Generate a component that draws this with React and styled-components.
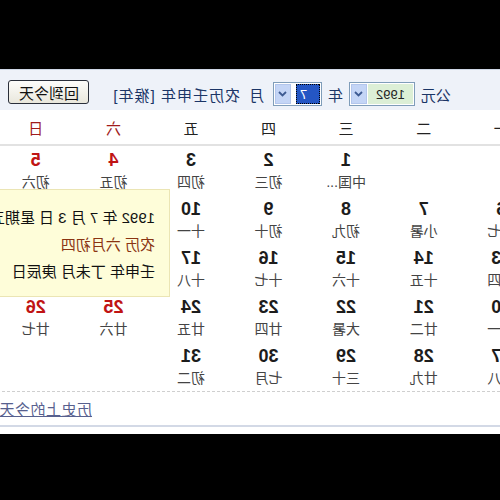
import React from 'react'
import styled, { createGlobalStyle } from 'styled-components'

const Global = createGlobalStyle`
  html, body { margin: 0; padding: 0; background: #000; }
  body { font-family: "Liberation Sans", "Noto Sans CJK SC", sans-serif; }
`

// the reference is a mirror image, so the whole page is flipped
const Stage = styled.div`
  width: 500px;
  height: 500px;
  overflow: hidden;
  background: #000;
  transform: scaleX(-1);
  padding-top: 69px;
  box-sizing: border-box;
`

const Panel = styled.div`
  width: 543px;
  margin-left: -40px;
  background: #fff;
  border-top: 1px solid #cfd7e6;
  padding-bottom: 7px;
`

const Header = styled.div`
  height: 40px;
  background: #eef2f9;
  display: flex;
  align-items: center;
  padding: 8px 0 0 89px;
  box-sizing: border-box;
  font-size: 15px;
  color: #1b3566;
`

const Label = styled.span`
  margin: ${p => p.m || '0 6px'};
`

const Select = styled.div`
  display: flex;
  height: 20px;
  border: 1px solid #7f9db9;
  background: #fff;
  padding: 1px;
  box-sizing: content-box;
`

const Field = styled.div`
  width: ${p => p.w}px;
  display: flex;
  align-items: center;
  justify-content: ${p => (p.hl ? 'flex-end' : 'center')};
  padding-right: ${p => (p.hl ? '4px' : '0')};
  box-sizing: border-box;
  font-size: 13px;
  color: ${p => (p.hl ? '#fff' : '#222')};
  background: ${p => (p.hl ? '#2456c4' : '#dcefd6')};
  outline: ${p => (p.hl ? '1px dotted #000' : 'none')};
  outline-offset: -1px;
`

const Arrow = styled.div`
  width: 16px;
  display: flex;
  align-items: center;
  justify-content: center;
  background: #c4d5f6;
  border: 1px solid #b3c6ec;
  box-sizing: border-box;
  margin-left: ${p => p.gap || 0}px;
`

const Lunar = styled.span`
  margin-left: 9px;
  font-size: 15px;
  color: #1b3566;
  letter-spacing: 1px;
`

const TodayBtn = styled.button`
  margin-left: 23px;
  width: 81px;
  height: 24px;
  padding: 0;
  font: 15px "Liberation Sans", "Noto Sans CJK SC", sans-serif;
  color: #111;
  background: linear-gradient(#fdfdfb, #e9e7dc);
  border: 1px solid #2a2f3a;
  border-radius: 3px;
  margin-top: -4px;
`

const Weeks = styled.div`
  display: grid;
  grid-template-columns: repeat(7, 1fr);
  height: 34px;
  align-items: center;
  border-bottom: 2px solid #e2e2e2;
`

const Week = styled.div`
  text-align: center;
  font-size: 15px;
  color: ${p => (p.red ? '#a01c1c' : '#222')};
`

const Grid = styled.div`
  position: relative;
  display: grid;
  grid-template-columns: repeat(7, 1fr);
  grid-auto-rows: 49px;
  border-bottom: 1px dashed #cfcfcf;
`

const Cell = styled.div`
  display: flex;
  flex-direction: column;
  align-items: center;
  padding-top: 4px;
`

const Num = styled.div`
  height: 20px;
  line-height: 20px;
  font-size: 18px;
  font-weight: bold;
  color: ${p => (p.red ? '#c01414' : '#1c1c1c')};
`

const Sub = styled.div`
  margin-top: 3px;
  height: 18px;
  line-height: 18px;
  font-size: 14px;
  color: #444;
  white-space: nowrap;
`

const Tip = styled.div`
  position: absolute;
  top: 43px;
  left: 370px;
  width: 200px;
  height: 108px;
  box-sizing: border-box;
  padding: 14px 0 0 14px;
  background: #fefdd9;
  border: 1px solid #ebe5b4;
  font-size: 15px;
  line-height: 27px;
  white-space: nowrap;
`

const TipLine = styled.div`
  color: ${p => p.c || '#111'};
`

const Footer = styled.div`
  height: 33px;
  display: flex;
  align-items: center;
  justify-content: flex-end;
  padding-right: 2px;
  border-bottom: 2px solid #d3d9e6;
`

const Link = styled.a`
  font-size: 15px;
  letter-spacing: 0.5px;
  color: #57608e;
  text-decoration: underline;
`

const Chevron = () => (
  <svg width="9" height="6" viewBox="0 0 9 6">
    <path d="M1 1 L4.5 4.5 L8 1" fill="none" stroke="#3d5a92" strokeWidth="1.8" />
  </svg>
)

const weekNames = ['一', '二', '三', '四', '五', '六', '日']

const lunar = [
  '中国...', '初三', '初四', '初五', '初六', '初七', '小暑', '初九', '初十', '十一',
  '十二', '十三', '十四', '十五', '十六', '十七', '十八', '十九', '二十', '廿一',
  '廿二', '大暑', '廿四', '廿五', '廿六', '廿七', '廿八', '廿九', '三十', '七月', '初二',
]

export default function App() {
  const cells = [null, null]
  for (let d = 1; d <= 31; d++) cells.push(d)

  return (
    <>
      <Global />
      <Stage>
        <Panel>
          <Header>
            <Label m="0 6px 0 0">公元</Label>
            <Select>
              <Field w={45}>1992</Field>
              <Arrow gap={1}><Chevron /></Arrow>
            </Select>
            <Label>年</Label>
            <Select>
              <Field w={24} hl>7</Field>
              <Arrow gap={5}><Chevron /></Arrow>
            </Select>
            <Label m="0 0 0 9px">月</Label>
            <Lunar>农历壬申年 [猴年]</Lunar>
            <TodayBtn>回到今天</TodayBtn>
          </Header>
          <Weeks>
            {weekNames.map((w, i) => (
              <Week key={w} red={i >= 5}>{w}</Week>
            ))}
          </Weeks>
          <Grid>
            {cells.map((d, i) =>
              d ? (
                <Cell key={i}>
                  <Num red={i % 7 >= 5}>{d}</Num>
                  <Sub>{lunar[d - 1]}</Sub>
                </Cell>
              ) : (
                <Cell key={i} />
              )
            )}
            <Tip>
              <TipLine>1992 年 7 月 3 日 星期五</TipLine>
              <TipLine c="#8a3412">农历 六月初四</TipLine>
              <TipLine>壬申年 丁未月 庚辰日</TipLine>
            </Tip>
          </Grid>
          <Footer>
            <Link>历史上的今天</Link>
          </Footer>
        </Panel>
      </Stage>
    </>
  )
}
